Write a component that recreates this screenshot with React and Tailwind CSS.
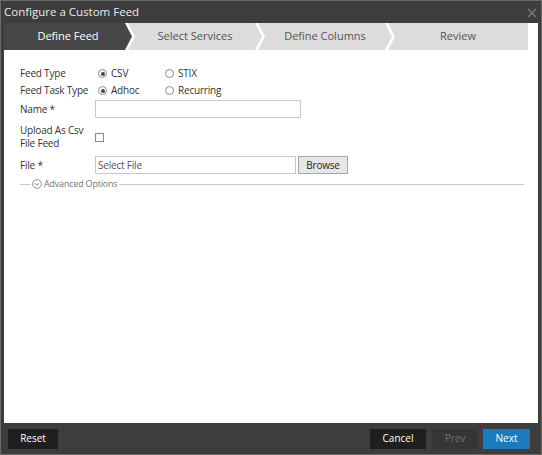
import React from "react";

const tabs = [
  { label: "Define Feed", active: true, width: "w-[128px]" },
  { label: "Select Services", width: "w-[134px]" },
  { label: "Define Columns", width: "w-[134px]" },
  { label: "Review", width: "flex-1" },
];

// chevron shapes for the wizard steps
const firstShape =
  "[clip-path:polygon(0_0,calc(100%-7px)_0,100%_50%,calc(100%-7px)_100%,0_100%)]";
const midShape =
  "[clip-path:polygon(0_0,calc(100%-7px)_0,100%_50%,calc(100%-7px)_100%,0_100%,7px_50%)]";
const lastShape = "[clip-path:polygon(0_0,100%_0,100%_100%,0_100%,7px_50%)]";

const Radio = ({ checked, label }) => (
  <label className="flex items-center gap-[4px] w-[67px]">
    <span className="w-[9px] h-[9px] rounded-full border border-[#8a8a8a] flex items-center justify-center">
      {checked && <span className="w-[4px] h-[4px] rounded-full bg-[#444]" />}
    </span>
    <span>{label}</span>
  </label>
);

const App = () => {
  return (
    <div
      className="w-[542px] h-[455px] flex flex-col bg-[#3d3d3d] border border-[#6a6a6a] text-[10px] tracking-[-0.2px] text-[#333]"
      style={{ fontFamily: '"Open Sans", sans-serif' }}
    >
      {/* Title bar */}
      <div className="h-[22px] flex items-center justify-between pl-[3px] pr-[4px]">
        <span className="text-[11.5px] tracking-normal text-[#ececec]">Configure a Custom Feed</span>
        <svg width="10" height="10" viewBox="0 0 10 10" className="mt-[1px]">
          <path d="M1 1L9 9M9 1L1 9" stroke="#7a7a7a" strokeWidth="1.4" />
        </svg>
      </div>

      {/* Body */}
      <div className="mx-[3px] flex-1 bg-white flex flex-col">
        {/* Wizard steps */}
        <div className="h-[27px] flex pr-[10px]">
          {tabs.map((tab, index) => (
            <div
              key={index}
              className={`${tab.width} ${index > 0 ? "-ml-[4px]" : ""} ${
                index === 0 ? firstShape : index === tabs.length - 1 ? lastShape : midShape
              } ${
                tab.active ? "bg-[#474747] text-white" : "bg-[#dcdcdc] text-[#555]"
              } flex items-center justify-center text-[11px] tracking-normal`}
            >
              {tab.label}
            </div>
          ))}
        </div>

        {/* Form */}
        <div className="pl-[16px] pr-[14px] pt-[15px] flex flex-col whitespace-nowrap">
          <div className="flex items-center h-[17px]">
            <span className="w-[75px]">Feed Type</span>
            <div className="flex pl-[3px]">
              <Radio checked label="CSV" />
              <Radio label="STIX" />
            </div>
          </div>
          <div className="flex items-center h-[17px]">
            <span className="w-[75px]">Feed Task Type</span>
            <div className="flex pl-[3px]">
              <Radio checked label="Adhoc" />
              <Radio label="Recurring" />
            </div>
          </div>
          <div className="flex items-center h-[18px] mt-[1px]">
            <span className="w-[75px]">Name *</span>
            <input className="w-[206px] h-[18px] border border-[#c8c8c8] outline-none px-[3px]" />
          </div>
          <div className="flex items-center mt-[6px]">
            <span className="w-[75px] leading-[13px]">
              Upload As Csv
              <br />
              File Feed
            </span>
            <span className="w-[9px] h-[9px] border border-[#8a8a8a] mt-[1px]" />
          </div>
          <div className="flex items-center h-[18px] mt-[6px]">
            <span className="w-[75px]">File *</span>
            <input
              className="w-[201px] h-[18px] border border-[#c8c8c8] outline-none px-[2px] placeholder:text-[#555]"
              placeholder="Select File"
            />
            <button className="ml-[2px] w-[50px] h-[18px] bg-[#e6e6e6] border border-[#a8a8a8] text-[#222]">
              Browse
            </button>
          </div>
          <div className="flex items-center mt-[2px] h-[16px]">
            <span className="w-[11px] h-px bg-[#c8c8c8]" />
            <svg width="10" height="10" viewBox="0 0 10 10" className="ml-[1px]">
              <circle cx="5" cy="5" r="4.4" fill="none" stroke="#8a8a8a" strokeWidth="0.9" />
              <path d="M3 4.2L5 6.2L7 4.2" fill="none" stroke="#777" strokeWidth="0.9" />
            </svg>
            <span className="ml-[2px] text-[9px] text-[#777]">Advanced Options</span>
            <span className="flex-1 h-px bg-[#c8c8c8] ml-[2px]" />
          </div>
        </div>
      </div>

      {/* Footer */}
      <div className="h-[31px] flex items-center pl-[7px] pr-[11px] text-[10px] tracking-normal text-white">
        <button className="w-[50px] h-[20px] bg-[#1f1f1f]">Reset</button>
        <div className="flex-1" />
        <button className="w-[56px] h-[20px] bg-[#1f1f1f]">Cancel</button>
        <button className="ml-[6px] w-[46px] h-[20px] bg-[#363636] text-[#707070]">Prev</button>
        <button className="ml-[5px] w-[47px] h-[20px] bg-[#1b7bbd]">Next</button>
      </div>
    </div>
  );
};

export default App;
